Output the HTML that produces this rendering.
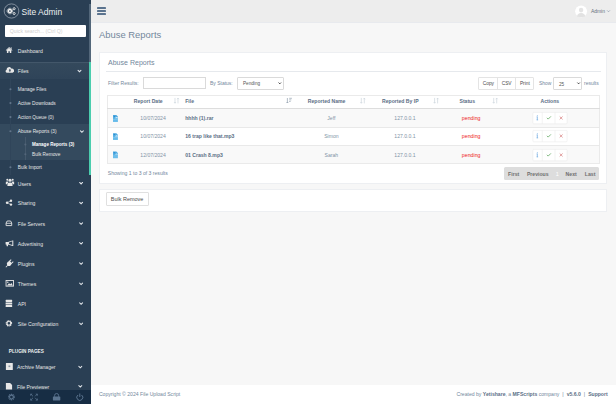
<!DOCTYPE html>
<html><head><meta charset="utf-8">
<style>
*{box-sizing:border-box;margin:0;padding:0}
html,body{width:616px;height:404px;overflow:hidden;background:#F7F7F7;font-family:"Liberation Sans",sans-serif;color:#73879C}
.a{position:absolute}
.t{position:absolute;white-space:nowrap;line-height:1}
#sb{left:0;top:0;width:91px;height:404px;background:#2A3F54}
.mi{color:#E7E7E7;font-size:5.1px}
.si{color:#E7E7E7;font-size:4.77px}
.chev{position:absolute;width:3px;height:3px;border-right:0.8px solid #E7E7E7;border-bottom:0.8px solid #E7E7E7;transform:rotate(45deg)}
.th{font-weight:bold;color:#5A6E85;font-size:5.1px}
.td{font-size:5.1px;color:#8193A6}
.tb{font-size:5.1px;font-weight:bold;color:#5A6E85}
.pend{font-size:5.25px;color:#EE1D23}
.hl{position:absolute;height:0.5px;background:#E9E9E9}
</style></head><body>
<!-- sidebar -->
<div id="sb" class="a">
  <div class="t" style="left:21.5px;top:7.5px;font-size:8.5px;color:#ECF0F1">Site Admin</div>
  <div class="a" style="left:5px;top:24.8px;width:81px;height:12.2px;background:#fff;border-radius:1px"></div>
  <div class="t" style="left:9.8px;top:28.9px;font-size:5.16px;color:#CFCFCF">Quick search... (Ctrl Q)</div>

  <div class="t mi" style="left:17.8px;top:49.0px">Dashboard</div>

  <div class="a" style="left:0;top:61.9px;width:91px;height:16.9px;background:linear-gradient(#34495C,#2F4459);border-top:0.5px solid #43576A"></div>
  <div class="t mi" style="left:17.8px;top:69.1px">Files</div>
  <div class="a" style="left:0;top:124.2px;width:91px;height:35.9px;background:#344A5E"></div>
  <div class="a" style="left:10.2px;top:79px;width:0.5px;height:95.7px;background:#30455A"></div>
  <div class="a" style="left:25.1px;top:137px;width:0.5px;height:23px;background:#45596C"></div>
  <div class="t si" style="left:17.8px;top:87.8px">Manage Files</div>
  <div class="t si" style="left:17.8px;top:101.7px">Active Downloads</div>
  <div class="t si" style="left:17.8px;top:115.8px">Action Queue (0)</div>
  <div class="t si" style="left:17.8px;top:130.0px">Abuse Reports (3)</div>
  <div class="t si" style="left:32px;top:143.2px;color:#fff;font-weight:bold;font-size:4.56px">Manage Reports (3)</div>
  <div class="t si" style="left:32px;top:152.9px">Bulk Remove</div>
  <div class="t si" style="left:17.8px;top:166.0px">Bulk Import</div>

  <div class="t mi" style="left:17.8px;top:181.5px">Users</div>
  <div class="t mi" style="left:17.8px;top:201.3px">Sharing</div>
  <div class="t mi" style="left:17.8px;top:221.9px">File Servers</div>
  <div class="t mi" style="left:17.8px;top:241.7px">Advertising</div>
  <div class="t mi" style="left:17.8px;top:261.9px">Plugins</div>
  <div class="t mi" style="left:17.8px;top:282.1px">Themes</div>
  <div class="t mi" style="left:17.8px;top:301.9px">API</div>
  <div class="t mi" style="left:17.8px;top:322.1px">Site Configuration</div>
  <div class="t" style="left:8.8px;top:350.3px;font-size:4.7px;font-weight:bold;color:#ECF0F1">PLUGIN PAGES</div>
  <div class="t mi" style="left:17px;top:365.2px">Archive Manager</div>
  <div class="t mi" style="left:17px;top:384.8px">File Previewer</div>

  <div class="a" style="left:88.6px;top:4.2px;width:2.4px;height:57.7px;background:#53677A"></div>
  <div class="a" style="left:88.9px;top:61.9px;width:2.1px;height:112.8px;background:#4BCDAE"></div>

  <div class="a" style="left:0;top:389.5px;width:91px;height:14.5px;background:#172D44"></div>
</div>

<!-- top bar -->
<div class="a" style="left:91px;top:0;width:525px;height:22.6px;background:#EDEDED;border-bottom:0.3px solid #E8EAEE"></div>
<div class="a" style="left:96.7px;top:7px;width:9.2px;height:1.9px;background:#5A738E;border-radius:0.4px"></div>
<div class="a" style="left:96.7px;top:10px;width:9.2px;height:1.9px;background:#5A738E;border-radius:0.4px"></div>
<div class="a" style="left:96.7px;top:13px;width:9.2px;height:1.9px;background:#5A738E;border-radius:0.4px"></div>
<div class="t" style="left:590.9px;top:9.6px;font-size:4.97px;color:#66717D">Admin</div>

<!-- page title -->
<div class="t" style="left:99px;top:30px;font-size:9.42px;color:#73879C">Abuse Reports</div>

<!-- card 1 -->
<div class="a" style="left:98.7px;top:51.6px;width:508.7px;height:132.4px;background:#fff;border:0.4px solid #EDEFF2"></div>
<div class="t" style="left:108px;top:58.6px;font-size:7.04px;color:#73879C">Abuse Reports</div>
<div class="a" style="left:106.1px;top:71px;width:494.9px;height:0.8px;background:#E6E9ED"></div>

<div class="t" style="left:108px;top:80.8px;font-size:5.04px">Filter Results:</div>
<div class="a" style="left:143.2px;top:77.3px;width:62.6px;height:12.2px;border:0.5px solid #DADADA;background:#fff"></div>
<div class="t" style="left:209.9px;top:80.8px;font-size:5.02px">By Status:</div>
<div class="a" style="left:237.1px;top:77.1px;width:47.2px;height:12.5px;border:0.5px solid #DADADA;background:#fff;border-radius:1px"></div>
<div class="t" style="left:243px;top:82.4px;font-size:4.68px;color:#555">Pending</div>

<div class="a" style="left:478.4px;top:77.3px;width:55.4px;height:12.4px;border:0.5px solid #E4E4E4;border-radius:1px;background:#fff"></div>
<div class="a" style="left:496.9px;top:77.3px;width:0.5px;height:12.4px;background:#E4E4E4"></div>
<div class="a" style="left:515px;top:77.3px;width:0.5px;height:12.4px;background:#E4E4E4"></div>
<div class="t" style="left:482.8px;top:82.2px;font-size:4.8px;color:#4A4A4A">Copy</div>
<div class="t" style="left:501.7px;top:82.2px;font-size:4.8px;color:#4A4A4A">CSV</div>
<div class="t" style="left:519.9px;top:82.2px;font-size:4.8px;color:#4A4A4A">Print</div>
<div class="t" style="left:538.9px;top:82.2px;font-size:4.96px">Show</div>
<div class="a" style="left:553.4px;top:77.2px;width:28.7px;height:12.4px;border:0.5px solid #DADADA;background:#fff;border-radius:1px"></div>
<div class="t" style="left:558.9px;top:82.5px;font-size:4.7px;color:#555">25</div>
<div class="t" style="left:584px;top:81.4px;font-size:5px">results</div>

<!-- table -->
<div class="a" style="left:107.3px;top:94.5px;width:492.3px;height:69.5px;background:#fff"></div>
<div class="a" style="left:107.5px;top:108.6px;width:492px;height:18.4px;background:#F9F9F9"></div>
<div class="a" style="left:107.5px;top:145.2px;width:492px;height:18.3px;background:#F9F9F9"></div>
<div class="a" style="left:107.3px;top:94.5px;width:492.3px;height:69.5px;border:0.5px solid #EAEAEA"></div>
<div class="a" style="left:107.3px;top:107.6px;width:492.3px;height:1.1px;background:#DDDDDD"></div>
<div class="hl" style="left:107.3px;top:127px;width:492.3px"></div>
<div class="hl" style="left:107.3px;top:145px;width:492.3px"></div>

<div class="t th" style="left:133.8px;top:98.5px">Report Date</div>
<div class="t th" style="left:185.2px;top:98.5px">File</div>
<div class="t th" style="left:307.8px;top:98.5px">Reported Name</div>
<div class="t th" style="left:382.1px;top:98.5px">Reported By IP</div>
<div class="t th" style="left:459.5px;top:98.5px">Status</div>
<div class="t th" style="left:540.5px;top:98.5px">Actions</div>

<div class="t td" style="left:140.3px;top:115.6px">10/07/2024</div>
<div class="t tb" style="left:185.2px;top:115.6px">hhhh (1).rar</div>
<div class="t td" style="left:327.3px;top:115.6px">Jeff</div>
<div class="t td" style="left:394.3px;top:115.6px">127.0.0.1</div>
<div class="t pend" style="left:461.85px;top:115.6px">pending</div>

<div class="t td" style="left:140.3px;top:133.7px">10/07/2024</div>
<div class="t tb" style="left:185.2px;top:133.7px">16 trap like that.mp3</div>
<div class="t td" style="left:324.2px;top:133.7px">Simon</div>
<div class="t td" style="left:394.3px;top:133.7px">127.0.0.1</div>
<div class="t pend" style="left:461.85px;top:133.7px">pending</div>

<div class="t td" style="left:140.3px;top:153.2px">12/07/2024</div>
<div class="t tb" style="left:185.2px;top:153.2px">01 Crash 8.mp3</div>
<div class="t td" style="left:324.6px;top:153.2px">Sarah</div>
<div class="t td" style="left:394.3px;top:153.2px">127.0.0.1</div>
<div class="t pend" style="left:461.85px;top:153.2px">pending</div>

<div class="t" style="left:107.8px;top:171.3px;font-size:5.1px">Showing 1 to 3 of 3 results</div>
<div class="a" style="left:504px;top:167.3px;width:94.8px;height:12.5px;background:#DDDDDD;border-radius:1.5px"></div>
<div class="t" style="left:508.1px;top:172px;font-size:5.15px;font-weight:bold;color:#6E6E6E">First</div>
<div class="t" style="left:526.9px;top:172px;font-size:5.15px;font-weight:bold;color:#6E6E6E">Previous</div>
<div class="t" style="left:555.8px;top:171.8px;font-size:5.5px;color:#fff">1</div>
<div class="t" style="left:565.6px;top:172px;font-size:5.15px;font-weight:bold;color:#6E6E6E">Next</div>
<div class="t" style="left:584.8px;top:172px;font-size:5.15px;font-weight:bold;color:#6E6E6E">Last</div>

<!-- card 2 -->
<div class="a" style="left:98.9px;top:188.9px;width:508.5px;height:22.8px;background:#fff;border:0.4px solid #EDEFF2"></div>
<div class="a" style="left:105.6px;top:192.3px;width:43.2px;height:13.6px;background:#fff;border:0.5px solid #E0E0E0;border-radius:1px"></div>
<div class="t" style="left:110.8px;top:196.6px;font-size:5.48px;color:#4A4A4A">Bulk Remove</div>

<!-- footer -->
<div class="a" style="left:91px;top:384.6px;width:525px;height:19.4px;background:#fff"></div>
<div class="t" style="left:98.9px;top:392.4px;font-size:5.1px">Copyright © 2024 File Upload Script</div>
<div class="t" style="left:456.5px;top:392.4px;font-size:5.1px">Created by <b style="color:#5A6E85">Yetishare</b>, a <b style="color:#5A6E85">MFScripts</b> company<span style="margin:0 3px">|</span><b style="color:#5A6E85">v5.6.0</b><span style="margin:0 3px">|</span><b style="color:#5A6E85">Support</b></div>

<svg class="a" style="left:0;top:0" width="616" height="404" viewBox="0 0 616 404">
<g fill="none" stroke="#E2E6EA" stroke-width="1.05" stroke-linecap="round" stroke-linejoin="miter" transform="">
 <polyline points="78.05,70.28 79.50,71.72 80.95,70.28"/>
 <polyline points="80.45,130.88 81.90,132.32 83.34,130.88"/>
 <polyline points="79.66,182.48 81.10,183.92 82.55,182.48"/>
 <polyline points="79.66,202.28 81.10,203.72 82.55,202.28"/>
 <polyline points="79.66,222.88 81.10,224.32 82.55,222.88"/>
 <polyline points="79.66,242.68 81.10,244.12 82.55,242.68"/>
 <polyline points="79.66,262.88 81.10,264.32 82.55,262.88"/>
 <polyline points="79.66,283.08 81.10,284.52 82.55,283.08"/>
 <polyline points="79.66,302.88 81.10,304.32 82.55,302.88"/>
 <polyline points="79.66,323.08 81.10,324.52 82.55,323.08"/>
 <polyline points="78.85,366.38 80.30,367.82 81.75,366.38"/>
 <polyline points="78.85,385.58 80.30,387.02 81.75,385.58"/>
</g>
<!-- logo -->
<ellipse cx="11.5" cy="11" rx="7.35" ry="7.1" fill="none" stroke="#A3AEBA" stroke-width="0.7"/>
<circle cx="9.9" cy="11" r="2.75" fill="none" stroke="#F4F4F4" stroke-width="0.9" stroke-dasharray="0.95 0.5"/>
<circle cx="9.9" cy="11" r="1.55" fill="none" stroke="#F4F4F4" stroke-width="1.4"/>
<circle cx="14.15" cy="8.7" r="1.05" fill="none" stroke="#EDEDED" stroke-width="0.9"/>
<circle cx="14.15" cy="13.5" r="1.05" fill="none" stroke="#EDEDED" stroke-width="0.9"/>
<g fill="#E7E7E7">
 <!-- home -->
 <path d="M5.75,50.2 L9.1,46.9 L12.5,50.2 L11.9,50.7 L9.1,48 L6.35,50.7Z"/>
 <path d="M6.9,50 L9.1,47.9 L11.3,50 L11.3,52.9 L9.8,52.9 L9.8,51.2 L8.4,51.2 L8.4,52.9 L6.9,52.9Z"/>
 <rect x="10.7" y="47.3" width="0.9" height="1.6"/>
 <!-- cloud download -->
 <path d="M7.2,72.8 A1.6,1.6 0 0 1 6.6,69.7 A2.4,2.4 0 0 1 11.2,68.6 A2.1,2.1 0 0 1 12.6,72.8Z"/>
 <!-- users -->
 <circle cx="10" cy="180.3" r="1.5"/><circle cx="7.3" cy="179.8" r="1"/><circle cx="12.7" cy="179.8" r="1"/>
 <path d="M7.4,186.1 L7.6,183.2 Q10,181.8 12.4,183.2 L12.6,186.1Z"/>
 <path d="M5.8,184.2 L5.9,181.8 Q7.3,181 8.6,181.8 L7,184.2Z"/>
 <path d="M14.2,184.2 L14.1,181.8 Q12.7,181 11.4,181.8 L13,184.2Z"/>
 <!-- share -->
 <circle cx="7.1" cy="202.7" r="1.3"/><circle cx="11" cy="200.7" r="1.2"/><circle cx="11" cy="204.6" r="1.2"/>
 <!-- bullhorn -->
 <path d="M5.6,241.9 L8.3,241.9 L8.3,244.6 L7.9,244.6 L8.1,246.2 L6.7,246.2 L6.4,244.6 L5.6,244.6Z"/>
 <path d="M8,241.9 L12.6,240.4 L13.3,240.4 L13.3,246 L12.6,246 L8,244.6Z M8.9,242.6 L8.9,243.9 L12.3,245.1 L12.3,241.3Z" fill-rule="evenodd"/>
 <!-- plug -->
 <path d="M5.5,267 L7.2,265.3 Q6.2,263.5 7.6,262 L9.6,260.8 L12,263.2 L10.8,265.2 Q9.3,266.6 7.8,265.8 L6.1,267.4Z"/>
 <rect x="9.8" y="259.2" width="0.9" height="2.6" transform="rotate(45 10.25 260.5)"/>
 <rect x="11.9" y="261.3" width="0.9" height="2.6" transform="rotate(45 12.35 262.6)"/>
 <!-- api -->
 <rect x="5.6" y="299.8" width="6.6" height="2.1" rx="0.6"/>
 <rect x="5.6" y="302.5" width="6.6" height="2.1" rx="0.3"/>
 <rect x="5.6" y="305.1" width="6.6" height="2" rx="0.6"/>
 <!-- archive manager -->
 <rect x="5.9" y="363" width="6.9" height="7" rx="0.3"/>
 <!-- file previewer -->
 <path d="M5.9,383 L10.1,383 L12.1,385 L12.1,389.6 L5.9,389.6Z"/>
</g>
<g fill="none" stroke="#E7E7E7">
 <path d="M7.2,202.7 L11,200.7 M7.2,202.7 L11,204.6" stroke-width="0.6"/>
 <!-- hdd -->
 <path d="M6.1,223 L7.2,221 L10.6,221 L11.7,223 L11.7,225.6 L6.1,225.6Z" stroke-width="0.9"/>
 <line x1="6.1" y1="223.3" x2="11.7" y2="223.3" stroke-width="0.8"/>
 <!-- picture -->
 <rect x="6.05" y="280.55" width="7.4" height="5.6" stroke-width="0.9"/>
 <!-- cog -->
 <circle cx="8.9" cy="323.35" r="2.6" stroke-width="1.3" stroke-dasharray="1 0.63"/>
 <circle cx="8.9" cy="323.35" r="1.9" stroke-width="1.1"/>
</g>
<path d="M7,285.5 L9,283.2 L10.3,284.3 L11.5,282.9 L12.8,285.5Z" fill="#E7E7E7"/>
<circle cx="7.8" cy="282.2" r="0.7" fill="#E7E7E7"/>
<rect x="8.5" y="365.5" width="1.8" height="1.6" fill="#8C98A4"/>
<path d="M9.9,68.9 L9.9,71" stroke="#2F4459" stroke-width="1" fill="none"/><path d="M8.7,70.5 L11.1,70.5 L9.9,72Z" fill="#2F4459"/>
<!-- sub-menu dots -->
<g fill="#62758A">
 <circle cx="10.45" cy="89.3" r="1.05"/><circle cx="10.45" cy="103.1" r="1.05"/><circle cx="10.45" cy="117.1" r="1.05"/><circle cx="10.45" cy="131.3" r="1.05"/><circle cx="10.45" cy="167.3" r="1.05"/>
 <circle cx="25.35" cy="144.5" r="1.05" fill="#53667A"/><circle cx="25.35" cy="154.2" r="1.05" fill="#53667A"/>
</g>
<!-- footer icons -->
<g fill="none" stroke="#5A738E">
 <circle cx="11.45" cy="397.05" r="2.7" stroke-width="1.3" stroke-dasharray="1 0.7"/>
 <circle cx="11.45" cy="397.05" r="1.9" stroke-width="1.1"/>
 <path d="M31.2,394.5 L33,396.3 M36.9,394.5 L35.1,396.3 M36.9,399.6 L35.1,397.8 M31.2,399.6 L33,397.8" stroke-width="0.8"/>
 <path d="M54.6,396.8 L54.6,395.5 A2,2 0 0 1 58.6,395.5 L58.6,396.8" stroke-width="0.9"/>
 <path d="M78,395 A3,3 0 1 0 81.6,395" stroke-width="1"/>
 <line x1="79.8" y1="393.5" x2="79.8" y2="397" stroke-width="1"/>
</g>
<path d="M30.3,393.7 L32.5,393.7 L30.3,395.9Z M37.7,393.7 L35.5,393.7 L37.7,395.9Z M37.7,400.4 L35.5,400.4 L37.7,398.2Z M30.3,400.4 L32.5,400.4 L30.3,398.2Z" fill="#5A738E"/>
<rect x="52.9" y="396.6" width="7.4" height="3.8" rx="0.4" fill="#5A738E"/>
<!-- avatar -->
<circle cx="581.1" cy="11.35" r="5.95" fill="#FFFFFF"/>
<ellipse cx="581.1" cy="10.1" rx="2.2" ry="2.35" fill="#E4E4E4"/>
<path d="M577,16.6 Q577.4,13.2 581.1,13 Q584.8,13.2 585.2,16.6 Q581.1,17.6 577,16.6Z" fill="#E2E2E2"/>
<polyline points="607.1,10.4 608.5,11.8 609.9,10.4" fill="none" stroke="#73879C" stroke-width="0.6"/>
<!-- select chevrons -->
<polyline points="278.6,82.6 279.8,83.8 281,82.6" fill="none" stroke="#333" stroke-width="0.95"/>
<polyline points="577.4,82.6 578.6,83.8 579.8,82.6" fill="none" stroke="#333" stroke-width="0.95"/>
<!-- sort icons -->
<g stroke="#CDD5DD" stroke-width="0.7" fill="none">
 <path d="M175.0,97.9 L175.0,103.2 M174.1,102.1 L175.0,103.2 L175.9,102.1 M178.0,103.4 L178.0,98.1 M177.1,99.2 L178.0,98.1 L178.9,99.2"/>
 <path d="M361.3,97.9 L361.3,103.2 M360.40000000000003,102.1 L361.3,103.2 L362.2,102.1 M364.3,103.4 L364.3,98.1 M363.40000000000003,99.2 L364.3,98.1 L365.2,99.2"/>
 <path d="M434.6,97.9 L434.6,103.2 M433.70000000000005,102.1 L434.6,103.2 L435.5,102.1 M437.6,103.4 L437.6,98.1 M436.70000000000005,99.2 L437.6,98.1 L438.5,99.2"/>
 <path d="M493.7,97.9 L493.7,103.2 M492.8,102.1 L493.7,103.2 L494.59999999999997,102.1 M496.7,103.4 L496.7,98.1 M495.8,99.2 L496.7,98.1 L497.59999999999997,99.2"/>
</g>
<path d="M287.4,98 L287.4,103 M286.4,102 L287.4,103 L288.4,102 M289.2,98.3 L291.9,98.3 M289.2,99.9 L291.3,99.9 M289.2,101.5 L290.6,101.5" stroke="#8A99A8" stroke-width="0.65" fill="none"/>
<!-- file icons -->
<defs><linearGradient id="fg" x1="0" y1="0" x2="0" y2="1"><stop offset="0" stop-color="#4AA6DF"/><stop offset="1" stop-color="#6FC0EC"/></linearGradient></defs>
<g>
 <path d="M113,115 L116.3,115 L117.9,116.6 L117.9,121.9 L113,121.9Z" fill="url(#fg)"/>
 <circle cx="114.4" cy="116.4" r="0.75" fill="#2E8FD0"/>
 <path d="M115.2,117.8 L116.6,117.1 L117.9,117.6 L117.9,118.2 L115.2,118.2Z" fill="#D8EEFA"/>
 <rect x="113" y="119.3" width="4.9" height="0.5" fill="#8FD0F2"/>
 <path d="M113,133.2 L116.3,133.2 L117.9,134.8 L117.9,140.1 L113,140.1Z" fill="url(#fg)"/>
 <circle cx="114.4" cy="134.6" r="0.75" fill="#2E8FD0"/>
 <path d="M115.2,136.0 L116.6,135.3 L117.9,135.8 L117.9,136.4 L115.2,136.4Z" fill="#D8EEFA"/>
 <rect x="113" y="137.5" width="4.9" height="0.5" fill="#8FD0F2"/>
 <path d="M113,151.4 L116.3,151.4 L117.9,153.0 L117.9,158.3 L113,158.3Z" fill="url(#fg)"/>
 <circle cx="114.4" cy="152.8" r="0.75" fill="#2E8FD0"/>
 <path d="M115.2,154.2 L116.6,153.5 L117.9,154.0 L117.9,154.6 L115.2,154.6Z" fill="#D8EEFA"/>
 <rect x="113" y="155.7" width="4.9" height="0.5" fill="#8FD0F2"/>
</g>
<!-- action buttons -->
<rect x="532.9" y="112.4" width="34.2" height="11.4" fill="#fff" stroke="#E6E6E6" stroke-width="0.45" rx="0.8"/>
<path d="M542.3,112.4 V123.8 M555,112.4 V123.8" stroke="#E6E6E6" stroke-width="0.45"/>
<circle cx="537.3" cy="115.80" r="0.5" fill="#6FAAE0"/>
<path d="M537.3,116.80 V119.90 M536.6,119.90 H538.1 M536.7,116.90 H537.3" stroke="#6FAAE0" stroke-width="0.75" fill="none"/>
<path d="M546.9,117.80 L548.2,119.10 L550.9,116.40" stroke="#78B478" stroke-width="0.95" fill="none"/>
<path d="M559.7,116.50 L562.6,119.40 M562.6,116.50 L559.7,119.40" stroke="#DC8E8E" stroke-width="0.85" fill="none"/>
<rect x="532.9" y="130.4" width="34.2" height="11.4" fill="#fff" stroke="#E6E6E6" stroke-width="0.45" rx="0.8"/>
<path d="M542.3,130.4 V141.8 M555,130.4 V141.8" stroke="#E6E6E6" stroke-width="0.45"/>
<circle cx="537.3" cy="133.80" r="0.5" fill="#6FAAE0"/>
<path d="M537.3,134.80 V137.90 M536.6,137.90 H538.1 M536.7,134.90 H537.3" stroke="#6FAAE0" stroke-width="0.75" fill="none"/>
<path d="M546.9,135.80 L548.2,137.10 L550.9,134.40" stroke="#78B478" stroke-width="0.95" fill="none"/>
<path d="M559.7,134.50 L562.6,137.40 M562.6,134.50 L559.7,137.40" stroke="#DC8E8E" stroke-width="0.85" fill="none"/>
<rect x="532.9" y="149.4" width="34.2" height="11.4" fill="#fff" stroke="#E6E6E6" stroke-width="0.45" rx="0.8"/>
<path d="M542.3,149.4 V160.8 M555,149.4 V160.8" stroke="#E6E6E6" stroke-width="0.45"/>
<circle cx="537.3" cy="152.80" r="0.5" fill="#6FAAE0"/>
<path d="M537.3,153.80 V156.90 M536.6,156.90 H538.1 M536.7,153.90 H537.3" stroke="#6FAAE0" stroke-width="0.75" fill="none"/>
<path d="M546.9,154.80 L548.2,156.10 L550.9,153.40" stroke="#78B478" stroke-width="0.95" fill="none"/>
<path d="M559.7,153.50 L562.6,156.40 M562.6,153.50 L559.7,156.40" stroke="#DC8E8E" stroke-width="0.85" fill="none"/>
</svg>
</body></html>
